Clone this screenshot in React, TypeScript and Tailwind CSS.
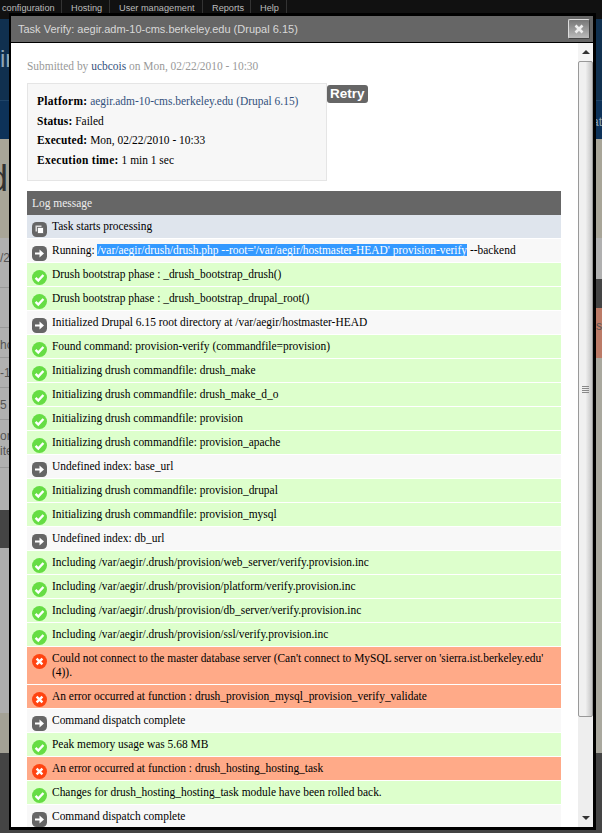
import React from "react";

type Kind = "start" | "info" | "ok" | "err";

const bgByKind: Record<Kind, string> = {
  start: "bg-[#dfe5ed]",
  info: "bg-[#f8f8f8]",
  ok: "bg-[#ddffcc]",
  err: "bg-[#ffaa88]",
};

function Icon({ kind }: { kind: Kind }) {
  return (
    <svg width="15" height="15" viewBox="0 0 15 15" className="mb-[-4px] mt-[3px] shrink-0">
      {kind === "ok" && (
        <>
          <circle cx="7.5" cy="7.5" r="7.5" fill="#66dd44" />
          <path d="M3.6 7.8 L6.3 10.6 L11.4 5" fill="none" stroke="#fff" strokeWidth="2.4" />
        </>
      )}
      {kind === "err" && (
        <>
          <circle cx="7.5" cy="7.5" r="7.5" fill="#ff4411" />
          <path d="M4.6 4.6 L10.4 10.4 M10.4 4.6 L4.6 10.4" fill="none" stroke="#fff" strokeWidth="2.4" />
        </>
      )}
      {kind === "info" && (
        <>
          <rect width="15" height="15" rx="4.5" fill="#666" />
          <path d="M3 6.4 H7.5 V3.6 L12 7.5 L7.5 11.4 V8.6 H3 Z" fill="#fff" />
        </>
      )}
      {kind === "start" && (
        <>
          <rect width="15" height="15" rx="4.5" fill="#666" />
          <rect x="3.5" y="3.5" width="6" height="6" fill="#ddd" />
          <rect x="5.5" y="5.5" width="6" height="6" fill="#fff" stroke="#666" strokeWidth="0.8" />
        </>
      )}
    </svg>
  );
}

const rows: { kind: Kind; text: React.ReactNode }[] = [
  { kind: "start", text: "Task starts processing" },
  {
    kind: "info",
    text: (
      <>
        Running:{" "}
        <span className="bg-[#3399ff] text-white">
          /var/aegir/drush/drush.php --root='/var/aegir/hostmaster-HEAD' provision-verify
        </span>{" "}
        --backend
      </>
    ),
  },
  { kind: "ok", text: "Drush bootstrap phase : _drush_bootstrap_drush()" },
  { kind: "ok", text: "Drush bootstrap phase : _drush_bootstrap_drupal_root()" },
  { kind: "info", text: "Initialized Drupal 6.15 root directory at /var/aegir/hostmaster-HEAD" },
  { kind: "ok", text: "Found command: provision-verify (commandfile=provision)" },
  { kind: "ok", text: "Initializing drush commandfile: drush_make" },
  { kind: "ok", text: "Initializing drush commandfile: drush_make_d_o" },
  { kind: "ok", text: "Initializing drush commandfile: provision" },
  { kind: "ok", text: "Initializing drush commandfile: provision_apache" },
  { kind: "info", text: "Undefined index: base_url" },
  { kind: "ok", text: "Initializing drush commandfile: provision_drupal" },
  { kind: "ok", text: "Initializing drush commandfile: provision_mysql" },
  { kind: "info", text: "Undefined index: db_url" },
  { kind: "ok", text: "Including /var/aegir/.drush/provision/web_server/verify.provision.inc" },
  { kind: "ok", text: "Including /var/aegir/.drush/provision/platform/verify.provision.inc" },
  { kind: "ok", text: "Including /var/aegir/.drush/provision/db_server/verify.provision.inc" },
  { kind: "ok", text: "Including /var/aegir/.drush/provision/ssl/verify.provision.inc" },
  {
    kind: "err",
    text: "Could not connect to the master database server (Can't connect to MySQL server on 'sierra.ist.berkeley.edu' (4)).",
  },
  { kind: "err", text: "An error occurred at function : drush_provision_mysql_provision_verify_validate" },
  { kind: "info", text: "Command dispatch complete" },
  { kind: "ok", text: "Peak memory usage was 5.68 MB" },
  { kind: "err", text: "An error occurred at function : drush_hosting_hosting_task" },
  { kind: "ok", text: "Changes for drush_hosting_hosting_task module have been rolled back." },
  { kind: "info", text: "Command dispatch complete" },
];

const navItems = [
  { label: "configuration", w: "w-[60px]" },
  { label: "Hosting", w: "w-[48px]" },
  { label: "User management", w: "w-[93px]" },
  { label: "Reports", w: "w-[48px]" },
  { label: "Help", w: "w-[36px]" },
];

function Background() {
  return (
    <div className="h-[833px] overflow-hidden bg-[#444] font-['Liberation_Sans',sans-serif]">
      <div className="flex h-[19px] bg-[#111] pl-[2px] text-[9.2px] leading-[17px] text-[#bbb]">
        {navItems.map((n) => (
          <div key={n.label} className={`${n.w} shrink-0 whitespace-nowrap border-r border-[#333]`}>
            <span className={n.label === "configuration" ? "" : "pl-[9px]"}>{n.label}</span>
          </div>
        ))}
      </div>
      <div className="flex h-[81px] justify-between bg-[#10304f] pt-[26px] text-[24px] leading-[28px] text-[#8fa6b8]">
        <span>ir</span>
      </div>
      <div className="flex h-[39px] justify-end border-t border-[#1f4468] bg-[#0d3259] pt-[12px] text-[12px] text-[#8fa6b8]">
        <span>at</span>
      </div>
      <div className="h-[99px] bg-[#a8a598] pt-[20px] text-[36px] leading-[40px] text-[#333]">
        <span className="ml-[-12px]">d</span>
      </div>
      <div className="flex h-[595px]">
        <div className="w-[300px] bg-[#b0b0b0] text-[12px] text-[#555]">
          <div className="h-[50px] border-b border-[#999] pt-[11px]">/2</div>
          <div className="h-[40px] border-b border-[#999]" />
          <div className="h-[30px] border-b border-[#999] pt-[8px]">ho</div>
          <div className="h-[30px] border-b border-[#999] pt-[6px]">-1</div>
          <div className="h-[32px] border-b border-[#999] pt-[8px]">5</div>
          <div className="h-[48px] border-b border-[#999] pt-[9px] leading-[15px]">
            orr
            <br />
            ite
          </div>
          <div className="h-[42px]" />
          <div className="h-[38px] bg-[#444]" />
          <div className="h-[165px] bg-[#adadad]" />
          <div className="h-[40px] bg-[#a3a195]" />
          <div className="h-[80px] bg-[#444]" />
        </div>
        <div className="flex-1 bg-[#a9a89e] text-[12px]">
          <div className="h-[41px] bg-[#b0b0b0]" />
          <div className="h-[29px] bg-[#444]" />
          <div className="h-[50px] bg-[#bb7a66] pt-[9px] text-right text-[#555]">ns</div>
          <div className="h-[395px]" />
          <div className="h-[80px] bg-[#444]" />
        </div>
      </div>
    </div>
  );
}

function Scrollbar() {
  return (
    <div className="flex w-[15px] shrink-0 flex-col bg-[#eeeeee]">
      <div className="flex h-[18px] items-center justify-center bg-[#f4f4f4]">
        <div className="h-0 w-0 border-x-[4px] border-b-[4px] border-x-transparent border-b-[#333]" />
      </div>
      <div className="flex h-[656px] flex-col items-center justify-end rounded-[2px] border border-[#999] bg-gradient-to-r from-[#f0f0f0] via-[#f0f0f0] to-[#c4c4c4]">
        <div className="mb-[323px] flex w-[7px] flex-col gap-[1px]">
          <div className="h-[1px] bg-[#888]" />
          <div className="h-[1px] bg-[#888]" />
          <div className="h-[1px] bg-[#888]" />
          <div className="h-[1px] bg-[#888]" />
        </div>
      </div>
      <div className="flex flex-1 items-end justify-center pb-[7px]">
        <div className="h-0 w-0 border-x-[4px] border-t-[4px] border-x-transparent border-t-[#333]" />
      </div>
    </div>
  );
}

function Modal() {
  return (
    <div className="absolute left-[9px] top-[13px] flex h-[817px] w-[587px] flex-col border-x-[2px] border-y-[3px] border-r-[3px] border-black bg-white">
      <div className="flex h-[26px] shrink-0 items-center justify-between bg-[#666] pl-[7px] pr-[3px] font-['Liberation_Sans',sans-serif] text-[11px] text-[#d8d8d8]">
        <span>Task Verify: aegir.adm-10-cms.berkeley.edu (Drupal 6.15)</span>
        <div className="flex h-[20px] w-[22px] items-center justify-center rounded-[2px] border border-[#ddd] border-b-[#444] border-r-[#444] bg-gradient-to-b from-[#777] to-[#bbb]">
          <svg width="10" height="10" viewBox="0 0 10 10">
            <path d="M1.5 1.5 L8.5 8.5 M8.5 1.5 L1.5 8.5" stroke="#eee" strokeWidth="2.6" fill="none" />
          </svg>
        </div>
      </div>
      <div className="flex min-h-0 flex-1 border-t border-black">
        <div className="min-w-0 flex-1 overflow-hidden pl-[16px] pr-[17px] font-['Liberation_Serif',serif] text-[11.45px] leading-[14px] text-black">
          <p className="mt-[16px] text-[#999]">
            Submitted by <span className="text-[#33517c]">ucbcois</span> on Mon, 02/22/2010 - 10:30
          </p>
          <div className="mt-[10px] flex items-start">
            <div className="h-[98px] w-[300px] border border-[#e5e5e5] bg-[#f7f7f7] pl-[9px] pt-[8px] leading-[19.5px]">
              <div>
                <b className="tracking-[0.3px]">Platform:</b>{" "}
                <span className="text-[#33517c]">aegir.adm-10-cms.berkeley.edu (Drupal 6.15)</span>
              </div>
              <div>
                <b className="tracking-[0.15px]">Status:</b> Failed
              </div>
              <div>
                <b className="tracking-[0.15px]">Executed:</b> Mon, 02/22/2010 - 10:33
              </div>
              <div>
                <b className="tracking-[0.3px]">Execution time:</b> 1 min 1 sec
              </div>
            </div>
            <div className="mt-[2px] rounded-[3px] bg-[#666] px-[3px] font-['Liberation_Sans',sans-serif] text-[13.5px] font-bold leading-[18px] text-white">
              Retry
            </div>
          </div>
          <div className="mt-[10px] h-[24px] bg-[#666] pl-[5px] pt-[5px] text-[#eee]">Log message</div>
          {rows.map((r, i) => (
            <div
              key={i}
              className={`flex gap-[5px] border-b border-white pb-[5px] pl-[5px] pt-[4px] ${bgByKind[r.kind]}`}
            >
              <Icon kind={r.kind} />
              <div className="min-w-0">{r.text}</div>
            </div>
          ))}
        </div>
        <Scrollbar />
      </div>
    </div>
  );
}

export default function App() {
  return (
    <div className="relative h-[833px] w-[602px] overflow-hidden">
      <Background />
      <Modal />
    </div>
  );
}
